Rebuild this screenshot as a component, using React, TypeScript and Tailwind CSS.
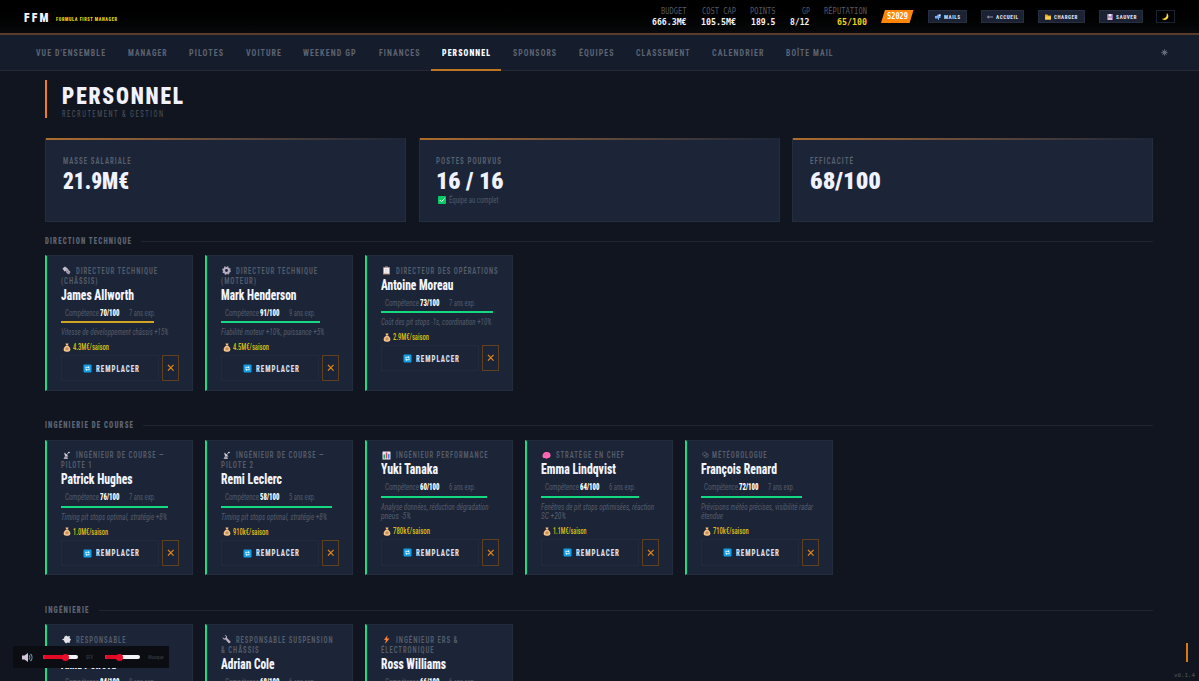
import { useLayoutEffect, useRef } from 'react';

type FitProps = { w: number; children: React.ReactNode; className?: string };

// Condensed lettering: squeezes a single line to the given width
function Fit({ w, children, className = '' }: FitProps) {
  const ref = useRef<HTMLSpanElement>(null);

  useLayoutEffect(() => {
    const el = ref.current;
    if (!el) return;
    el.style.transform = 'none';
    const spacing = parseFloat(getComputedStyle(el).letterSpacing) || 0;
    const natural = el.getBoundingClientRect().width - spacing;
    el.style.transform = `scaleX(${w / natural})`;
  }, [w, children]);

  return (
    <span className={`block shrink-0 ${className}`} style={{ width: w }}>
      <span ref={ref} className="inline-block origin-left whitespace-nowrap align-top">
        {children}
      </span>
    </span>
  );
}

const navItems = [
  { label: "VUE D'ENSEMBLE", w: 69 },
  { label: 'MANAGER', w: 38.5 },
  { label: 'PILOTES', w: 34 },
  { label: 'VOITURE', w: 35 },
  { label: 'WEEKEND GP', w: 52.5 },
  { label: 'FINANCES', w: 40.5 },
  { label: 'PERSONNEL', w: 48, active: true },
  { label: 'SPONSORS', w: 43 },
  { label: 'ÉQUIPES', w: 34.5 },
  { label: 'CLASSEMENT', w: 53.5 },
  { label: 'CALENDRIER', w: 51.5 },
  { label: 'BOÎTE MAIL', w: 46.5 },
];

const headerStats = [
  { label: 'BUDGET', lw: 25.5, value: '666.3M€', vw: 34.5 },
  { label: 'COST CAP', lw: 34, value: '105.5M€', vw: 35 },
  { label: 'POINTS', lw: 25.5, value: '189.5', vw: 24.5 },
  { label: 'GP', lw: 8, value: '8/12', vw: 19.5 },
  { label: 'RÉPUTATION', lw: 43, value: '65/100', vw: 30, gold: true },
];

type IconName =
  | 'bolt' | 'gear' | 'clipboard' | 'dish' | 'chart' | 'brain' | 'cloud' | 'wrench' | 'puff' | 'zap';

type Member = {
  icon: IconName;
  role: [string, number][];
  name: string;
  nameW: number;
  skill: number;
  exp: number;
  bar: number;
  gold?: boolean;
  desc: [string, number][];
  pay: string;
  payW: number;
};

const sections: { title: string; w: number; members: Member[] }[] = [
  {
    title: 'DIRECTION TECHNIQUE',
    w: 86,
    members: [
      { icon: 'bolt', role: [['DIRECTEUR TECHNIQUE', 81], ['(CHÂSSIS)', 36.5]], name: 'James Allworth', nameW: 73, skill: 70, exp: 7, bar: 92.7, gold: true, desc: [['Vitesse de développement châssis +15%', 107.5]], pay: '4.3M€/saison', payW: 36 },
      { icon: 'gear', role: [['DIRECTEUR TECHNIQUE', 81], ['(MOTEUR)', 35]], name: 'Mark Henderson', nameW: 75.5, skill: 91, exp: 9, bar: 98.7, desc: [['Fiabilité moteur +10%, puissance +5%', 103.5]], pay: '4.5M€/saison', payW: 36 },
      { icon: 'clipboard', role: [['DIRECTEUR DES OPÉRATIONS', 101.7]], name: 'Antoine Moreau', nameW: 72.5, skill: 73, exp: 7, bar: 111.3, desc: [['Coût des pit stops -1s, coordination +10%', 110.5]], pay: '2.9M€/saison', payW: 36 },
    ],
  },
  {
    title: 'INGÉNIERIE DE COURSE',
    w: 88,
    members: [
      { icon: 'dish', role: [['INGÉNIEUR DE COURSE —', 87.5], ['PILOTE 1', 30.5]], name: 'Patrick Hughes', nameW: 71.5, skill: 76, exp: 7, bar: 106.7, desc: [['Timing pit stops optimal, stratégie +8%', 106]], pay: '1.0M€/saison', payW: 35 },
      { icon: 'dish', role: [['INGÉNIEUR DE COURSE —', 87.5], ['PILOTE 2', 32]], name: 'Remi Leclerc', nameW: 61, skill: 58, exp: 5, bar: 110.7, desc: [['Timing pit stops optimal, stratégie +8%', 106]], pay: '910k€/saison', payW: 35.5 },
      { icon: 'chart', role: [['INGÉNIEUR PERFORMANCE', 91.5]], name: 'Yuki Tanaka', nameW: 57, skill: 60, exp: 6, bar: 105.5, desc: [['Analyse données, réduction dégradation', 107.5], ['pneus -5%', 30]], pay: '780k€/saison', payW: 37 },
      { icon: 'brain', role: [['STRATÈGE EN CHEF', 68]], name: 'Emma Lindqvist', nameW: 75, skill: 64, exp: 6, bar: 98, desc: [['Fenêtres de pit stops optimisées, réaction', 113], ['SC +20%', 25]], pay: '1.1M€/saison', payW: 33.5 },
      { icon: 'cloud', role: [['MÉTÉOROLOGUE', 54.5]], name: 'François Renard', nameW: 76, skill: 72, exp: 7, bar: 100.7, desc: [['Prévisions météo précises, visibilité radar', 112], ['étendue', 22]], pay: '710k€/saison', payW: 35.7 },
    ],
  },
  {
    title: 'INGÉNIERIE',
    w: 43.5,
    members: [
      { icon: 'puff', role: [['RESPONSABLE', 49.5], ['AERO', 20]], name: 'Anna Petrova', nameW: 55, skill: 84, exp: 8, bar: 100, desc: [['Développement aéro +10%', 80]], pay: '1.9M€/saison', payW: 36 },
      { icon: 'wrench', role: [['RESPONSABLE SUSPENSION', 96.5], ['& CHÂSSIS', 37.5]], name: 'Adrian Cole', nameW: 53.5, skill: 68, exp: 6, bar: 100, desc: [['Grip mécanique +8%', 60]], pay: '1.2M€/saison', payW: 36 },
      { icon: 'zap', role: [['INGÉNIEUR ERS &', 61.5], ['ÉLECTRONIQUE', 52.5]], name: 'Ross Williams', nameW: 65, skill: 66, exp: 6, bar: 100, desc: [['Récupération ERS +8%', 65]], pay: '1.1M€/saison', payW: 36 },
    ],
  },
];

function RoleIcon({ name }: { name: IconName }) {
  return (
    <svg viewBox="0 0 18 18" className="h-[9px] w-[9px] shrink-0">
      {name === 'bolt' && (
        <g>
          <path d="M1 5 6 1l5 4 0 4-6 2z" fill="#c6bdcf" />
          <path d="m7 7 4-2 6 7-3 5-5-3z" fill="#aea5b8" />
          <path d="m9 13 4-4M12 15l3-3" stroke="#685f76" />
        </g>
      )}
      {name === 'gear' && (
        <g fill="none" stroke="#b9adc4">
          <circle cx="9" cy="9" r="5" strokeWidth="4.200" />
          <circle cx="9" cy="9" r="7.5" strokeWidth="2.500" strokeDasharray="3 2.9" />
        </g>
      )}
      {name === 'clipboard' && (
        <g>
          <rect x="2" y="2" width="14" height="15" rx="1" fill="#c28a70" />
          <path d="M4 4h10v11H4z" fill="#f4eef2" />
          <path d="M6 1h6v3H6z" fill="#a9a0b4" />
          <path d="M6 7h6M6 10h6M6 12.500h4" stroke="#cfc4d0" />
        </g>
      )}
      {name === 'dish' && (
        <g>
          <path d="M5 3c-1 6 2 9 8 8z" fill="#dcd9e1" />
          <path d="m9 8 5-6" stroke="#cfcbd6" strokeWidth="1.600" />
          <path d="m6 10-3 6h9l-2-5z" fill="#a9a4b2" />
          <circle cx="14" cy="3" r="1.500" fill="#e8e6ec" />
        </g>
      )}
      {name === 'chart' && (
        <g>
          <rect x="1" y="1" width="16" height="16" rx="1" fill="#e9e9f0" />
          <path d="M3 7h3v8H3z" fill="#18a667" />
          <path d="M7.500 3h3v12h-3z" fill="#e5395e" />
          <path d="M12 6h3v9h-3z" fill="#3388dd" />
        </g>
      )}
      {name === 'brain' && (
        <g>
          <path d="M1 10c0-5 4-9 9-8 5 0 8 4 7 8-1 4-4 4-6 4l-1 2-4-2c-3 1-5-1-5-4z" fill="#ff68b5" />
          <path d="M4 9c2-2 4-1 5 0m0-4c2 0 2 2 4 2" fill="none" stroke="#dd4799" />
        </g>
      )}
      {name === 'cloud' && (
        <g fill="none" stroke="#596170" strokeWidth="2">
          <path d="M4 9a3 3 0 0 1 1-5 4 4 0 0 1 7 2 3 3 0 0 1 2 5c-2 2-5 1-7 1" />
          <path d="m5 10 7-3" />
        </g>
      )}
      {name === 'wrench' && (
        <path d="M1 4 4 7l3-1 1-3-3-3c4 0 6 3 5 6l7 7c1 2-2 4-4 3L7 9C4 10 1 8 1 4z" fill="#bbb1c3" />
      )}
      {name === 'puff' && (
        <path d="m0 9 4-2 1-4 4-2 2 2 5-1-1 4 3 3-2 3-1 4-4-1-3 2-3-3-1-3z" fill="#e4e2e8" />
      )}
      {name === 'zap' && <path d="M11 0 4 10h4l-2 8 9-11h-5z" fill="#ff8136" />}
    </svg>
  );
}

function MoneyIcon() {
  return (
    <svg viewBox="0 0 16 18" className="h-[9px] w-2 shrink-0">
      <path d="M5 1h6L9.500 5C14 8 16 12 14 16c-2 2-10 2-12 0C0 12 2 8 6.500 5z" fill="#f6c38b" />
      <path d="M5.500 5h5" stroke="#a96b43" strokeWidth="1.500" />
      <circle cx="8" cy="11.500" r="3" fill="#b07a40" />
      <path d="M8 9v5" stroke="#ffe0a4" />
    </svg>
  );
}

function ReplaceIcon() {
  return (
    <svg viewBox="0 0 18 18" className="h-[9px] w-[9px] shrink-0">
      <rect x="1" y="1" width="16" height="16" rx="2" fill="#129fe6" />
      <path d="M5.500 9V6.500h5M12.500 9v2.500h-5" fill="none" stroke="#e9f8ff" strokeWidth="1.800" />
      <path d="m10 4 3.500 2.500L10 9zM8 9l-3.500 2.500L8 14z" fill="#e9f8ff" />
    </svg>
  );
}

function StaffCard({ m }: { m: Member }) {
  return (
    <div className="h-[135.5px] border border-l-2 border-[#232c3d] border-l-[#18dc86] bg-[#1c2537] pt-[9.5px] pl-[14px]">
      {m.role.map(([text, w], i) => (
        <div key={text} className="flex h-[10px] items-center text-[8.5px] leading-[10px] font-semibold tracking-[1.2px] text-[#565d6c]">
          {i === 0 && (
            <span className={m.icon === 'cloud' ? 'w-[11px]' : 'w-[14.3px] pl-[1px]'}>
              <RoleIcon name={m.icon} />
            </span>
          )}
          <Fit w={w}>{text}</Fit>
        </div>
      ))}
      <div className="h-5 text-[14px] leading-[19px] font-extrabold text-[#f2f5ff]">
        <Fit w={m.nameW}>{m.name}</Fit>
      </div>
      <div className="flex h-[13px] pl-[3.3px] text-[8.5px] leading-[14px] text-[#535a69]">
        <Fit w={34}>Compétence</Fit>
        <Fit w={19.5} className="ml-[1px] font-black text-white">{m.skill}/100</Fit>
        <Fit w={26.5} className="ml-[9.5px]">{m.exp} ans exp.</Fit>
      </div>
      <div className={`mt-[2.5px] h-[2px] ${m.gold ? 'bg-[#d1a51f]' : 'bg-[#13d981]'}`} style={{ width: m.bar }} />
      <div className="mt-[5px] text-[8.5px] leading-[9.6px] text-[#555c6b] italic">
        {m.desc.map(([text, w]) => (
          <Fit key={text} w={w}>{text}</Fit>
        ))}
      </div>
      <div className="mt-[4.5px] flex h-[10px] items-center pl-[1.500px] text-[8.5px] leading-[10px] font-medium text-[#dcc012]">
        <MoneyIcon />
        <Fit w={m.payW} className="ml-[2.5px]">{m.pay}</Fit>
      </div>
      <div className="mt-[2.7px] flex h-[26.5px] gap-[2.7px]">
        <button className="flex w-[98px] items-center border border-[#232b3b] pt-[1px] pl-[20.5px] text-[8.5px] leading-[10px] font-extrabold tracking-[1.2px] text-[#dce1ee]">
          <ReplaceIcon />
          <Fit w={43} className="ml-1">REMPLACER</Fit>
        </button>
        <button className="flex w-[17px] items-center justify-center border border-[#60401f]">
          <svg viewBox="0 0 8 8" className="h-[7.5px] w-[7.5px]">
            <path d="m1 1 6 6M7 1 1 7" stroke="#ee8717" strokeWidth="1.300" />
          </svg>
        </button>
      </div>
    </div>
  );
}

function HeaderButton({ w, label, labelW, children, className }: { w: number; label: string; labelW: number; children: React.ReactNode; className: string }) {
  return (
    <button
      className={`flex h-[13px] shrink-0 items-center border border-[#262e40] bg-[#1b2234] text-[6px] font-black tracking-[0.6px] text-[#d5daea] ${className}`}
      style={{ width: w }}
    >
      {children}
      <Fit w={labelW} className="ml-[3px] pt-[0.5px]">{label}</Fit>
    </button>
  );
}

function Slider({ value }: { value: number }) {
  return (
    <div className="relative h-1 w-[34.5px] rounded-full bg-[#f3f3f5]">
      <div className="h-1 rounded-full bg-[#e00a25]" style={{ width: value }} />
      <div className="absolute -top-[1.5px] h-[7px] w-[7px] rounded-full bg-[#ea0c28]" style={{ left: value - 3.5 }} />
    </div>
  );
}

export default function App() {
  return (
    <div className="relative h-[681px] w-full overflow-hidden bg-[#11151f] font-['Roboto',sans-serif] [font-stretch:75%]">
      <header className="flex h-[35px] items-center border-b-2 border-[#5a3d2a] bg-linear-to-b from-black to-[#080a0b] pl-6">
        <Fit w={24.5} className="pt-[1px] text-[13.5px] font-black tracking-[2.5px] text-[#f5f5ff]">FFM</Fit>
        <Fit w={61} className="mt-[4px] ml-[7px] text-[6px] font-black tracking-[0.8px] text-[#ead310]">FORMULA FIRST MANAGER</Fit>
        <div className="ml-auto flex items-start gap-[14.5px] pt-[1px] font-['DejaVu_Sans_Mono',monospace]">
          {headerStats.map((s) => (
            <div key={s.label} className="flex flex-col items-end">
              <Fit w={s.lw} className="h-[10px] text-[8px] leading-[10px] text-[#565962]">{s.label}</Fit>
              <Fit w={s.vw} className={`h-[10px] text-[9.5px] leading-[10px] font-bold ${s.gold ? 'text-[#f5ce13]' : 'text-[#f2f3fa]'}`}>{s.value}</Fit>
            </div>
          ))}
        </div>
        <div className="ml-[14px] flex h-[13px] w-[32.5px] items-center bg-[#ff860b] pt-[1px] pl-[5.5px] font-['DejaVu_Sans_Mono',monospace] text-[8px] font-bold text-white [clip-path:polygon(12%_0,100%_0,88%_100%,0_100%)]">
          <Fit w={21}>S2029</Fit>
        </div>
        <HeaderButton w={39} label="MAILS" labelW={16} className="ml-[14.5px] pl-[6px]">
          <svg viewBox="0 0 12 12" className="h-[6px] w-[6px]">
            <path d="M0 4h3l3-3h5v7H8v4H6V9H0z" fill="#79a9ed" />
            <path d="M8 1h3v3H8z" fill="#e5edfb" />
          </svg>
        </HeaderButton>
        <HeaderButton w={43.5} label="ACCUEIL" labelW={22} className="ml-[13.5px] pl-[5.5px]">
          <svg viewBox="0 0 12 12" className="h-[6px] w-[6px]">
            <path d="M12 6H1m3-2.500L1 6l3 2.500" fill="none" stroke="#b6bccb" strokeWidth="1.500" />
          </svg>
        </HeaderButton>
        <HeaderButton w={47} label="CHARGER" labelW={23.5} className="ml-[14px] pl-[6px]">
          <svg viewBox="0 0 12 12" className="h-[6px] w-[6px]">
            <path d="M0 1h5l1 2h6v8H0z" fill="#e8a914" />
            <path d="M1 5h11v6H0z" fill="#ffd04a" />
          </svg>
        </HeaderButton>
        <HeaderButton w={44} label="SAUVER" labelW={20.5} className="ml-[14px] pl-[7px]">
          <svg viewBox="0 0 12 12" className="h-[6px] w-[6px]">
            <path d="M0 0h12v12H0z" fill="#8d6c9f" />
            <path d="M3 0h6v5H3z" fill="#ebe6f2" />
            <path d="M2 7h8v5H2z" fill="#d8bfd2" />
          </svg>
        </HeaderButton>
        <button className="mr-6 ml-[13px] flex h-[13px] w-[19px] shrink-0 items-center justify-center border border-[#1c2231]">
          <svg viewBox="0 0 12 12" className="h-[7px] w-[7px]">
            <path d="M8 0c6 5 2 12-4 12-2 0-3-1-4-2 6 0 9-4 8-10z" fill="#ffdb3d" />
          </svg>
        </button>
      </header>

      <nav className="flex h-9 items-center border-b border-[#252b36] bg-[#151c2b] pl-[24.4px] text-[9.5px] font-bold tracking-[1.3px] text-[#5d6473]">
        {navItems.map((item) => (
          <div
            key={item.label}
            className={`relative flex h-9 items-center px-[11.4px] ${item.active ? 'font-black text-white' : ''}`}
          >
            <Fit w={item.w} className="pt-[1px]">{item.label}</Fit>
            {item.active && <div className="absolute inset-x-0 bottom-0 h-[2px] bg-[#c07522]" />}
          </div>
        ))}
        <svg viewBox="0 0 14 14" className="mr-[31px] ml-auto h-[7px] w-[7px]">
          <circle cx="7" cy="7" r="3" fill="none" stroke="#858b98" strokeWidth="2" />
          <path d="M7 0v14M0 7h14M2 2l10 10M12 2 2 12" stroke="#747b88" />
        </svg>
      </nav>

      <main className="pt-[9px] pr-[46px] pl-[45.4px]">
        <div className="h-[38px] border-l-2 border-[#f0820f] pl-[14.3px]">
          <Fit w={121} className="h-[29px] pt-[1.5px] text-[24px] leading-[29px] font-black tracking-[2px] text-[#f0f2ff]">PERSONNEL</Fit>
          <Fit w={101} className="text-[8.5px] leading-[10px] tracking-[2px] text-[#4f5563]">RECRUTEMENT &amp; GESTION</Fit>
        </div>

        <div className="mt-5 grid grid-cols-3 gap-[12.5px]">
          {[
            { label: 'MASSE SALARIALE', lw: 67.5, value: '21.9M€', vw: 66 },
            { label: 'POSTES POURVUS', lw: 65, value: '16 / 16', vw: 67.5, note: 'Équipe au complet' },
            { label: 'EFFICACITÉ', lw: 43, value: '68/100', vw: 71 },
          ].map((s) => (
            <div key={s.label} className="h-[84px] border border-[#252e3f] bg-[#1c2537]">
              <div className="-mt-px h-[2px] bg-linear-to-r from-[#b06c2a] to-[#1c2537]" />
              <div className="pt-[15.5px] pl-[16.5px]">
                <Fit w={s.lw} className="text-[8.5px] leading-[10px] font-semibold tracking-[1.3px] text-[#5a6170]">{s.label}</Fit>
                <Fit w={s.vw} className="mt-[1px] h-7 text-[24px] leading-[29px] font-black text-[#f0f2ff]">{s.value}</Fit>
                {s.note && (
                  <div className="flex items-center pl-[2px] text-[8.5px] leading-[10px] text-[#525968]">
                    <svg viewBox="0 0 16 16" className="h-2 w-2">
                      <rect width="16" height="16" rx="1.500" fill="#08c963" />
                      <path d="m3.500 8 3.500 3.500L13 5" fill="none" stroke="#fff" strokeWidth="2" />
                    </svg>
                    <Fit w={49.5} className="ml-[3px]">{s.note}</Fit>
                  </div>
                )}
              </div>
            </div>
          ))}
        </div>

        <div className="mt-[12.2px] flex flex-col gap-[28.1px]">
          {sections.map((section) => (
            <section key={section.title}>
              <div className="mb-[7px] flex h-[14px] items-center gap-[10px] text-[8.5px] font-black tracking-[1.4px] text-[#5e6574]">
                <Fit w={section.w}>{section.title}</Fit>
                <div className="h-px flex-1 bg-[#1e2634]" />
              </div>
              <div className="grid grid-cols-7 gap-3">
                {section.members.map((m) => (
                  <StaffCard key={m.name} m={m} />
                ))}
              </div>
            </section>
          ))}
        </div>
      </main>

      <div className="absolute top-[646px] left-[12.5px] flex h-[22px] w-[156.500px] items-center bg-[#0b0d12] pl-[9.5px] text-[5.5px] text-[#3f434c]">
        <svg viewBox="0 0 22 18" className="mr-[10px] h-[9px] w-[11px] shrink-0">
          <path d="M0 5h5l7-5v18l-7-5H0z" fill="#d3c5da" />
          <path d="M14 5c2 2 2 6 0 8M17 2c4 4 4 10 0 14" fill="none" stroke="#5e93b0" strokeWidth="2.400" />
        </svg>
        <Slider value={22.5} />
        <Fit w={7} className="mr-3 ml-[8.5px]">SFX</Fit>
        <Slider value={14} />
        <Fit w={15.5} className="ml-[8.5px]">Musique</Fit>
      </div>

      <div className="absolute top-[643px] left-[1186px] h-[19px] w-[2px] bg-[#d97916]" />
      <div className="absolute right-[4px] bottom-[2px] font-['DejaVu_Sans_Mono',monospace] text-[5.5px] leading-2 text-[#555a65]">
        <Fit w={21}>v0.1.4</Fit>
      </div>
    </div>
  );
}
